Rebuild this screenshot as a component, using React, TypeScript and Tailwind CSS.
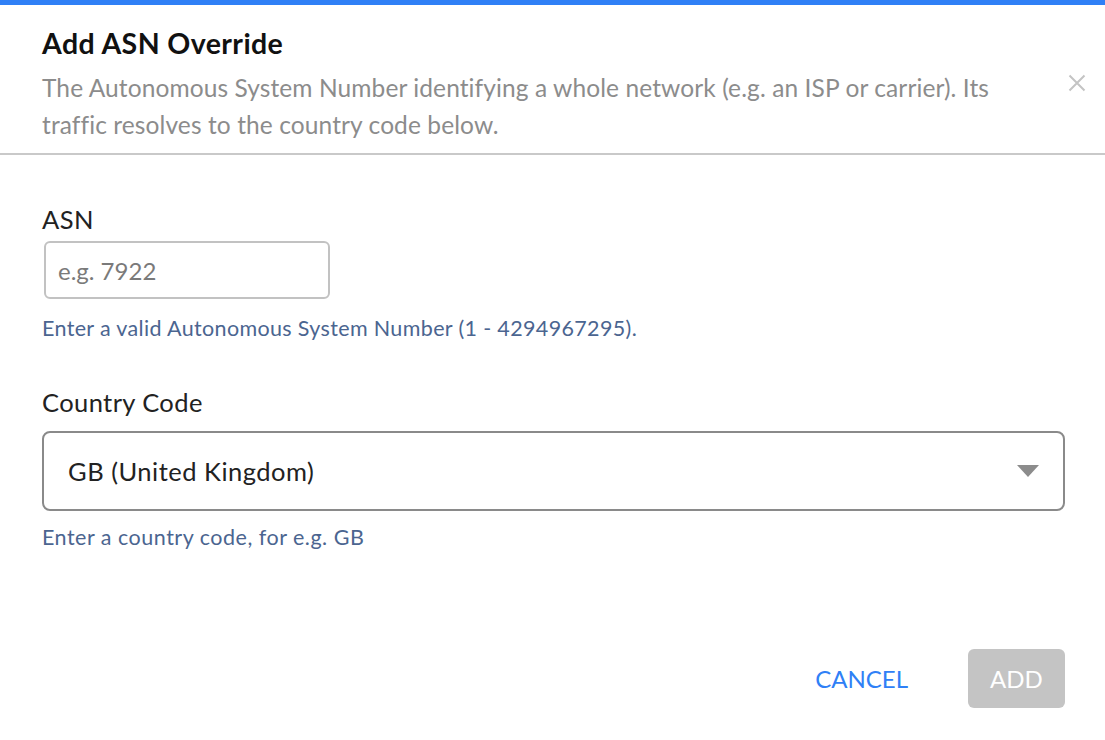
import { useState } from 'react'

export default function App() {
  const [asn, setAsn] = useState('')
  const [country, setCountry] = useState('GB')

  return (
    <div className="min-h-screen w-full bg-white font-['Lato','Liberation_Sans',sans-serif]">
      <div className="h-[5px] w-full bg-[#2f80f6]" />

      {/* header */}
      <div className="flex items-start justify-between border-b-2 border-[#c9c9c9] pl-[42px] pr-[19px] pt-[20px] pb-[10px]">
        <div>
          <h1 className="text-[28.5px] font-bold leading-[36px] tracking-[0.4px] text-[#111]">Add ASN Override</h1>
          <p className="mt-[8px] max-w-[1000px] text-[24.5px] leading-[37px] tracking-[0.1px] text-[#8c8c8c]">
            The Autonomous System Number identifying a whole network (e.g. an ISP or carrier). Its traffic resolves to the country code below.
          </p>
        </div>
        <button className="mt-[49px] text-[#c4c4c4]">
          <svg width="18" height="18" viewBox="0 0 18 18" fill="none" stroke="currentColor" strokeWidth="2">
            <path d="M1.5 1.5L16.5 16.5M16.5 1.5L1.5 16.5" />
          </svg>
        </button>
      </div>

      {/* form */}
      <div className="flex flex-col pl-[42px] pr-[40px] pt-[48px]">
        <label className="text-[25.5px] leading-[32px] tracking-[0.4px] text-[#222]">ASN</label>
        <input
          value={asn}
          onChange={(e) => setAsn(e.target.value)}
          placeholder="e.g. 7922"
          className="mt-[6px] ml-[2px] h-[58px] w-[286px] rounded-[6px] border-2 border-[#c2c2c2] px-[12px] text-[24px] text-[#222] outline-none placeholder:text-[#7a7a7a]"
        />
        <p className="mt-[15px] text-[21.5px] leading-[28px] tracking-[0.35px] text-[#4b6590]">
          Enter a valid Autonomous System Number (1 - 4294967295).
        </p>

        <label className="mt-[44px] text-[25.5px] leading-[32px] tracking-[0.4px] text-[#222]">Country Code</label>
        <div className="relative mt-[13px] h-[80px] w-full rounded-[8px] border-2 border-[#8a8a8a]">
          <select
            value={country}
            onChange={(e) => setCountry(e.target.value)}
            className="h-full w-full appearance-none bg-transparent pl-[24px] text-[25.5px] tracking-[0.5px] text-[#222] outline-none"
          >
            <option value="GB">GB (United Kingdom)</option>
            <option value="US">US (United States)</option>
            <option value="DE">DE (Germany)</option>
          </select>
          <svg className="pointer-events-none absolute right-[24px] top-[32px]" width="22" height="12" viewBox="0 0 22 12">
            <path d="M0 0H22L11 12Z" fill="#8c8c8c" />
          </svg>
        </div>
        <p className="mt-[12px] text-[21.5px] leading-[28px] tracking-[0.5px] text-[#4b6590]">Enter a country code, for e.g. GB</p>

        <div className="mt-[98px] flex items-center justify-end gap-[60px]">
          <button className="text-[24px] uppercase text-[#2f80f6]">Cancel</button>
          <button disabled className="h-[59px] w-[97px] rounded-[6px] bg-[#c4c4c4] text-[24px] uppercase text-white">
            Add
          </button>
        </div>
      </div>
    </div>
  )
}
